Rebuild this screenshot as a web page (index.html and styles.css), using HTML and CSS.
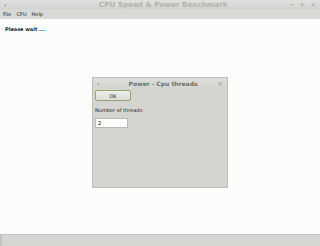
FILE: index.html
```html
<!DOCTYPE html>
<html lang="en">
<head>
  <meta charset="UTF-8" />
  <title>CPU Speed &amp; Power Benchmark</title>
  <link rel="stylesheet" href="styles.css">
</head>
<body>
  <div class="window">
    <div class="titlebar">
      <span class="menu-btn">&#9662;</span>
      <span class="title">CPU Speed &amp; Power Benchmark</span>
      <span class="controls">
        <span>&minus;</span>
        <span>+</span>
        <span>&times;</span>
      </span>
    </div>
    <div class="menubar">
      <span>File</span>
      <span>CPU</span>
      <span>Help</span>
    </div>
    <div class="content">
      <p class="wait">Please wait ...</p>
      <div class="dialog">
        <div class="dlg-title">
          <span class="menu-btn">&#9662;</span>
          <span class="title">Power - Cpu threads</span>
          <span class="close">&times;</span>
        </div>
        <div class="dlg-body">
          <button class="ok">OK</button>
          <label for="threads">Number of threads:</label>
          <input type="text" id="threads" value="2">
        </div>
      </div>
    </div>
    <div class="statusbar"></div>
  </div>
</body>
</html>
```

FILE: styles.css
```css
body {
  margin: 0;
  font-family: "DejaVu Sans", sans-serif;
  font-size: 5px;
  color: #222;
}
.window {
  width: 320px;
  height: 246px;
  display: flex;
  flex-direction: column;
  background: #fcfcfa;
}
.titlebar {
  height: 9px;
  background: linear-gradient(#e0e1de, #d3d4d0);
  display: flex;
  align-items: center;
  padding: 0 4px;
  color: #b2b3af;
}
.titlebar .title {
  flex: 1;
  text-align: center;
  font-weight: bold;
  font-size: 7.2px;
  padding-left: 22px;
}
.menu-btn {
  font-size: 5px;
  color: #aaa;
  width: 12px;
}
.controls {
  display: flex;
  gap: 5px;
  font-size: 7px;
  color: #a4a5a1;
}
.menubar {
  height: 10px;
  background: #d9dad6;
  display: flex;
  align-items: center;
  gap: 5px;
  padding: 0 3px;
  color: #222;
}
.content {
  flex: 1;
  position: relative;
  padding: 0 5px;
}
.wait {
  margin: 7px 0 0;
  font-weight: bold;
}
.dialog {
  position: absolute;
  left: 92px;
  top: 58px;
  width: 136px;
  height: 111px;
  background: #d4d5d1;
  border: 1px solid #bcbdb9;
  box-sizing: border-box;
  display: flex;
  flex-direction: column;
}
.dlg-title {
  height: 11px;
  display: flex;
  align-items: center;
  padding: 0 4px;
  background: linear-gradient(#dedfdb, #d3d4d0);
  color: #6f706a;
}
.dlg-title .title {
  flex: 1;
  text-align: center;
  font-weight: bold;
  font-size: 6px;
}
.close {
  font-size: 7px;
  color: #999;
}
.dlg-body {
  padding: 1px 2px;
  display: flex;
  flex-direction: column;
  align-items: flex-start;
}
.ok {
  width: 36px;
  height: 11px;
  padding: 0;
  font: inherit;
  background: linear-gradient(#eeeeec, #dcdcd8);
  border: 1px solid #8fa86a;
  border-radius: 2px;
  color: #222;
}
label {
  margin-top: 6px;
}
input {
  margin-top: 5px;
  width: 33px;
  height: 10px;
  box-sizing: border-box;
  padding: 0 2px;
  font: inherit;
  border: 1px solid #b9bab6;
  background: #fcfcfa;
}
.statusbar {
  height: 12px;
  background: #d4d6d2;
  border-top: 1px solid #c3c4c0;
  border-left: 2px solid #c3c4c0;
  box-sizing: border-box;
}
```
